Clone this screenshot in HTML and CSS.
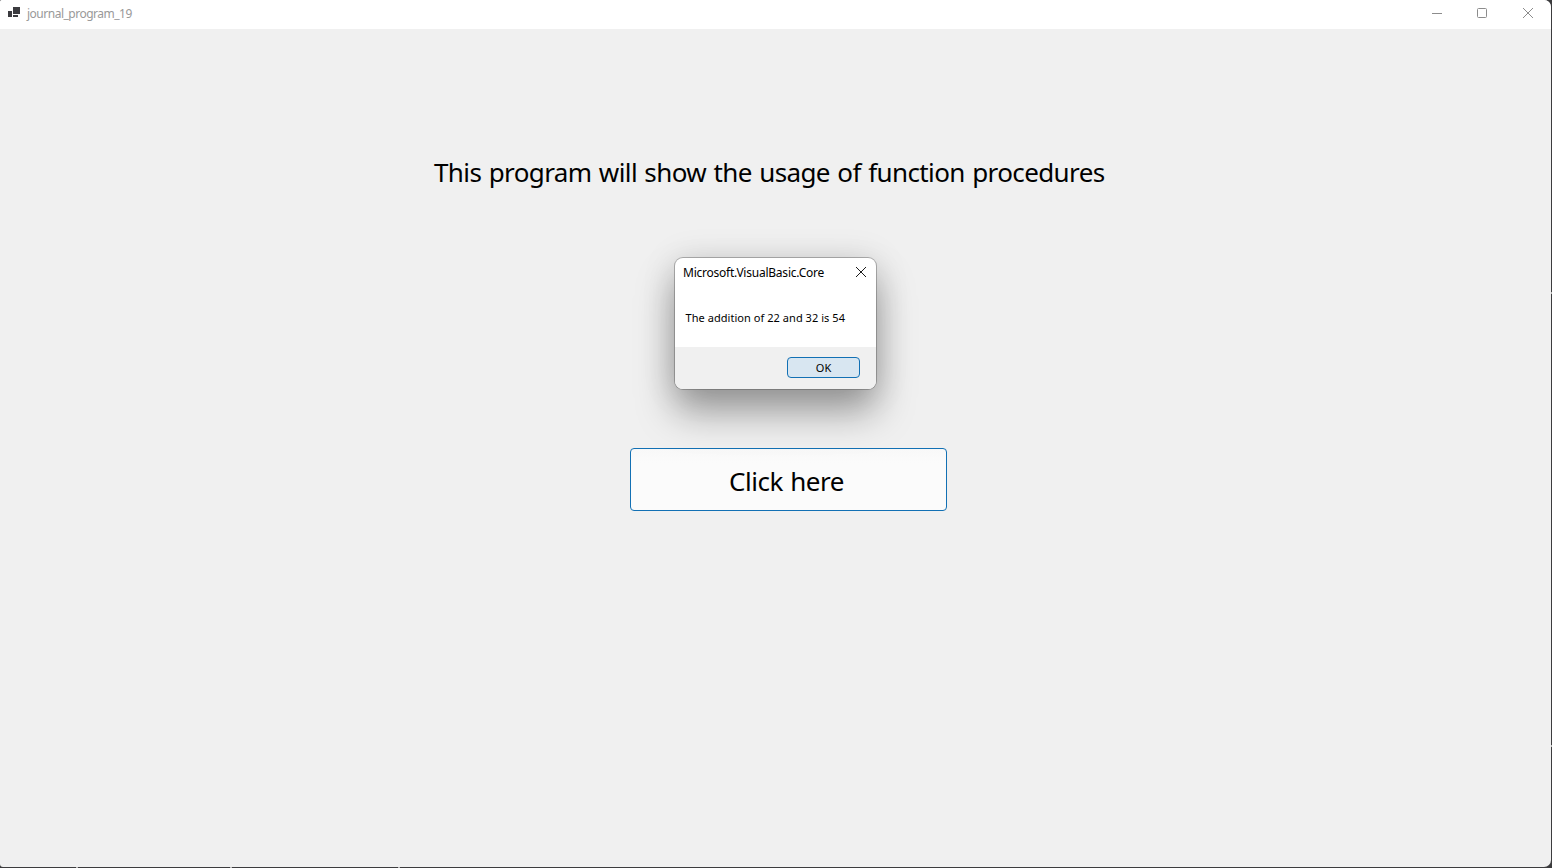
FILE: index.html
```html
<!DOCTYPE html>
<html lang="en">
<head>
<meta charset="utf-8">
<title>journal_program_19</title>
<link rel="stylesheet" href="styles.css">
</head>
<body>
<div class="window">
  <header class="titlebar">
    <svg class="app-icon" width="12" height="12" viewBox="0 0 12 12" fill="#3b3b3f"><path d="M5 0h7v7H5zM0 4h4v6H0zM5 8h5v2H5z"/></svg>
    <span class="window-title">journal_program_19</span>
    <div class="controls">
      <svg width="12" height="12" viewBox="0 0 12 12"><path d="M1 6.500h10"/></svg>
      <svg width="12" height="12" viewBox="0 0 12 12"><rect x="1.500" y="1.500" width="9" height="9" rx="1"/></svg>
      <svg width="12" height="12" viewBox="0 0 12 12"><path d="M1 1l10 10M11 1L1 11"/></svg>
    </div>
  </header>
  <main class="form">
    <h1 class="heading">This program will show the usage of function procedures</h1>
    <button class="main-button"><span class="main-label">Click here</span></button>
  </main>
</div>
<div class="frame-mark mark-a"></div>
<div class="frame-mark mark-b"></div>
<div class="frame-mark mark-c"></div>
<div class="frame-mark mark-d"></div>
<div class="frame-mark mark-e"></div>
<section class="dialog">
  <header class="dialog-head">
    <span class="dialog-title">Microsoft.VisualBasic.Core</span>
    <svg class="dialog-close" width="12" height="12" viewBox="0 0 12 12"><path d="M1 1l10 10M11 1L1 11"/></svg>
  </header>
  <p class="message">The addition of 22 and 32 is 54</p>
  <footer class="dialog-foot"><button class="ok-button">OK</button></footer>
</section>
</body>
</html>
```
FILE: styles.css
```css
* { box-sizing: border-box; }
body {
  margin: 0;
  height: 868px;
  overflow: hidden;
  background: #3c3c3e;
  color: #000;
  font-family: "Noto Sans", "Open Sans", sans-serif;
}
button { font-family: inherit; color: inherit; padding: 0; }
svg { display: block; flex: none; }
.window {
  width: 1551px;
  height: 867px;
  overflow: hidden;
  background: #f0f0f0;
  border-radius: 2px 7px 7px 3px;
}
.titlebar {
  height: 29px;
  display: flex;
  align-items: center;
  padding: 0 17px 3px 8px;
  background: #fff;
}
.app-icon { margin-right: 7px; }
.window-title {
  padding-top: 2px;
  font-size: 12px;
  line-height: 18px;
  letter-spacing: -0.5px;
  color: #999;
  white-space: nowrap;
}
.controls {
  display: grid;
  grid-template-columns: 45px 46px 12px;
  margin-left: auto;
  fill: none;
  stroke: #8c8c8c;
}
.form { display: flex; flex-direction: column; }
.heading {
  margin: 124px 0 0 434px;
  font-size: 26px;
  line-height: 38px;
  font-weight: 400;
  letter-spacing: -0.6px;
  word-spacing: 1.200px;
  white-space: nowrap;
}
.main-button {
  width: 317px;
  height: 63px;
  margin: 257px 0 0 630px;
  border: 1px solid #1270b4;
  border-radius: 4px;
  background: linear-gradient(#f8f8f8, #fbfbfb 14px);
}
.main-label {
  display: block;
  padding: 3px 4px 0 0;
  font-size: 26px;
  line-height: 38px;
  letter-spacing: -0.45px;
  word-spacing: 1px;
}
.dialog {
  position: absolute;
  left: 675px;
  top: 258px;
  width: 201px;
  height: 131px;
  display: flex;
  flex-direction: column;
  background: #fff;
  border-radius: 8px;
  box-shadow: 0 0 0 1px rgba(70, 70, 70, .38), 0 23px 38px rgba(0, 0, 0, .35), 0 2px 34px rgba(0, 0, 0, .13);
}
.dialog-head {
  height: 30px;
  display: flex;
  align-items: center;
  justify-content: space-between;
  padding: 0 9px 2px 8px;
}
.dialog-title {
  padding-top: 2px;
  font-size: 12px;
  line-height: 18px;
  letter-spacing: -0.23px;
  white-space: nowrap;
}
.dialog-close { stroke: #1b1b1b; fill: none; }
.message {
  margin: 21px 0 0 10.500px;
  font-size: 11px;
  line-height: 18px;
  letter-spacing: 0.05px;
  white-space: nowrap;
}
.dialog-foot {
  height: 42px;
  margin-top: auto;
  padding: 10px 16px 0;
  display: flex;
  justify-content: flex-end;
  background: #f0f0f0;
  border-radius: 0 0 8px 8px;
}
.ok-button {
  width: 73px;
  height: 21px;
  border: 1px solid #1270b4;
  border-radius: 4px;
  background: #d8e6f1;
  font-size: 11px;
  line-height: 19px;
}
.frame-mark { position: absolute; width: 2px; height: 1px; background: #b8b8b8; }
.mark-a { left: 76px; top: 867px; }
.mark-b { left: 230px; top: 867px; }
.mark-c { left: 398px; top: 867px; }
.mark-d { left: 1551px; top: 292px; width: 1px; height: 2px; }
.mark-e { left: 1551px; top: 745px; width: 1px; height: 2px; }
```
